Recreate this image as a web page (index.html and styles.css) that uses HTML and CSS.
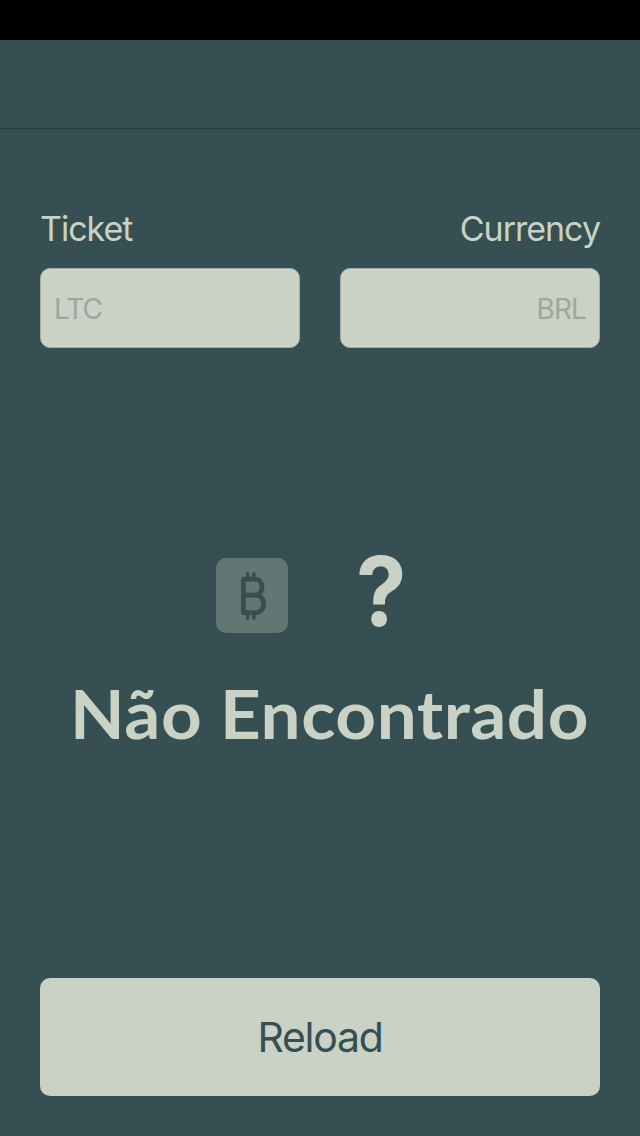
FILE: index.html
```html
<!DOCTYPE html>
<html lang="pt">
<head>
<meta charset="utf-8">
<title>Ticket</title>
<link rel="stylesheet" href="styles.css">
</head>
<body>
<div class="status-bar"></div>
<header class="nav-bar"></header>
<main class="content">
  <form class="fields">
    <label class="field">
      <span class="label">Ticket</span>
      <input class="input" type="text" placeholder="LTC">
    </label>
    <label class="field field-right">
      <span class="label">Currency</span>
      <input class="input" type="text" placeholder="BRL">
    </label>
  </form>
  <section class="result">
    <div class="symbols">
      <svg class="coin" width="72" height="75" viewBox="0 0 72 75">
        <rect width="72" height="75" rx="10" fill="#627674"/>
        <g fill="none" stroke="#354f52" stroke-linecap="round" stroke-linejoin="round">
          <path stroke-width="4.8" d="M27.4 21.2H38.5C43.3 21.2 46 24.2 46 29C46 34 43.3 37.2 38.5 37.2H27.4M38.5 37.2C44.5 37.2 47.6 40.5 47.6 45.9C47.6 51.4 44.5 54.7 38.5 54.7H27.4V21.2"/>
          <path stroke-width="3.4" d="M31.6 15.7V20M38 15.7V20M31.6 56V60.3M38 56V60.3"/>
        </g>
      </svg>
      <span class="question">?</span>
    </div>
    <h1 class="message">Não Encontrado</h1>
  </section>
  <button class="reload" type="button">Reload</button>
</main>
</body>
</html>
```
FILE: styles.css
```css
* { box-sizing: border-box; }
body {
  margin: 0;
  height: 1136px;
  display: flex;
  flex-direction: column;
  background: #354f52;
  color: #cad2c5;
  font-family: Inter, "Liberation Sans", sans-serif;
}
.status-bar { height: 40px; background: #000; }
.nav-bar { height: 89px; border-bottom: 1px solid #263b3f; }
.content {
  flex: 1;
  display: flex;
  flex-direction: column;
  padding: 79px 40px 40px;
}
.fields { display: grid; grid-template-columns: 1fr 1fr; gap: 40px; }
.field { display: flex; flex-direction: column; gap: 20px; }
.label { height: 40px; line-height: 41px; font-size: 34px; font-weight: 400; letter-spacing: -1px; }
.field-right { text-align: right; }
.input {
  width: 100%;
  height: 80px;
  padding: 1px 13px 0;
  border: 1px solid #a5ada2;
  border-radius: 10px;
  background: #cad2c5;
  color: #354f52;
  font: 400 28px Inter, sans-serif;
  letter-spacing: -0.9px;
  text-align: inherit;
}
.input::placeholder { color: #a0a59e; opacity: 1; }
.result { margin-top: 200px; }
.symbols { display: flex; height: 96px; padding-left: 176px; }
.coin { margin-top: 10px; }
.question {
  margin: -4px 0 0 68px;
  font-size: 96px;
  line-height: 95px;
  font-weight: 700;
  transform: scaleX(0.94);
  transform-origin: left;
}
.message {
  margin: 29px 0 0 30px;
  font: 700 67px/80px Lato, sans-serif;
  letter-spacing: 0.5px;
  white-space: nowrap;
  transform: scaleX(1.06);
  transform-origin: left;
}
.reload {
  height: 118px;
  margin-top: auto;
  border: 0;
  border-radius: 10px;
  background: #cad2c5;
  color: #354f52;
  font: 400 41px Inter, sans-serif;
  letter-spacing: -1.3px;
}
```
